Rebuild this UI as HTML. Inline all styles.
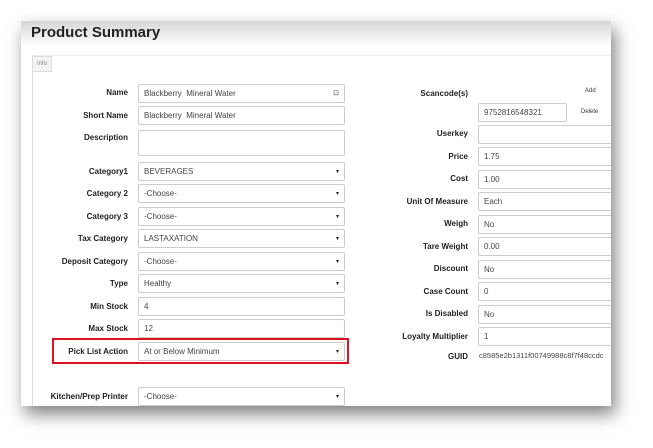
<!DOCTYPE html>
<html><head><style>
body{margin:0;width:653px;height:448px;background:#fff;position:relative;overflow:hidden;font-family:"Liberation Sans",Arial,sans-serif}
.panel{position:absolute;left:21px;top:21px;width:590px;height:385px;background:#fff;box-shadow:4px 8px 16px rgba(0,0,0,.5);overflow:hidden}
.hdr{position:absolute;left:0;top:0;width:590px;height:26px;background:linear-gradient(#d6d6d6,#f4f4f4 70%,#fff)}
.t{position:absolute;left:10px;top:3px;font-size:15px;font-weight:bold;color:#222}
.ln{position:absolute;left:11px;top:34px;width:579px;border-top:1px solid #eee}
.vl{position:absolute;left:11px;top:34px;height:360px;border-left:1px solid #ddd}
.tab{position:absolute;left:11px;top:35px;width:18px;height:14px;background:#f2f2f2;border:1px solid #ddd;font-size:6px;color:#888;line-height:14px;text-align:center}
.l{position:absolute;font-size:8px;font-weight:bold;color:#222;text-align:right;width:120px}
.i{position:absolute;border:1px solid #ccc;border-radius:2px;font-size:8px;color:#444;line-height:18px;padding-left:5px;box-sizing:border-box;height:19px;background:#fff}
.s::after{content:"▾";position:absolute;right:5px;top:0;font-size:6px;color:#222}
.red{position:absolute;left:31px;top:317px;width:297px;height:26px;border:2px solid #e01020;box-sizing:border-box}
.sm{position:absolute;font-size:6px;color:#333}
</style></head><body>
<div class="panel">
<div class="hdr"></div><div class="t">Product Summary</div>
<div class="ln"></div><div class="vl"></div><div class="tab">Info</div>

<div class="l" style="left:-13px;top:67px">Name</div><div class="i" style="left:117px;top:63px;width:207px">Blackberry&nbsp; Mineral Water<span style="position:absolute;right:5px;font-size:7px">⊡</span></div>
<div class="l" style="left:-13px;top:90px">Short Name</div><div class="i" style="left:117px;top:85px;width:207px">Blackberry&nbsp; Mineral Water</div>
<div class="l" style="left:-13px;top:112px">Description</div><div class="i" style="left:117px;top:109px;width:207px;height:26px"></div>
<div class="l" style="left:-13px;top:146px">Category1</div><div class="i s" style="left:117px;top:141px;width:207px">BEVERAGES</div>
<div class="l" style="left:-13px;top:168px">Category 2</div><div class="i s" style="left:117px;top:163px;width:207px">-Choose-</div>
<div class="l" style="left:-13px;top:191px">Category 3</div><div class="i s" style="left:117px;top:186px;width:207px">-Choose-</div>
<div class="l" style="left:-13px;top:213px">Tax Category</div><div class="i s" style="left:117px;top:208px;width:207px">LASTAXATION</div>
<div class="l" style="left:-13px;top:236px">Deposit Category</div><div class="i s" style="left:117px;top:231px;width:207px">-Choose-</div>
<div class="l" style="left:-13px;top:258px">Type</div><div class="i s" style="left:117px;top:253px;width:207px">Healthy</div>
<div class="l" style="left:-13px;top:281px">Min Stock</div><div class="i" style="left:117px;top:276px;width:207px">4</div>
<div class="l" style="left:-13px;top:303px">Max Stock</div><div class="i" style="left:117px;top:298px;width:207px">12</div>
<div class="red"></div>
<div class="l" style="left:-13px;top:326px">Pick List Action</div><div class="i s" style="left:117px;top:321px;width:207px">At or Below Minimum</div>
<div class="l" style="left:-13px;top:371px">Kitchen/Prep Printer</div><div class="i s" style="left:117px;top:366px;width:207px">-Choose-</div>

<div class="l" style="left:327px;top:68px">Scancode(s)</div><div class="sm" style="left:564px;top:67px">Add</div>
<div class="i" style="left:457px;top:82px;width:89px">9752816548321</div><div class="sm" style="left:560px;top:88px">Delete</div>
<div class="l" style="left:327px;top:108px">Userkey</div><div class="i" style="left:457px;top:104px;width:140px"></div>
<div class="l" style="left:327px;top:131px">Price</div><div class="i" style="left:457px;top:126px;width:140px">1.75</div>
<div class="l" style="left:327px;top:153px">Cost</div><div class="i" style="left:457px;top:149px;width:140px">1.00</div>
<div class="l" style="left:327px;top:176px">Unit Of Measure</div><div class="i" style="left:457px;top:171px;width:140px">Each</div>
<div class="l" style="left:327px;top:198px">Weigh</div><div class="i" style="left:457px;top:194px;width:140px">No</div>
<div class="l" style="left:327px;top:221px">Tare Weight</div><div class="i" style="left:457px;top:216px;width:140px">0.00</div>
<div class="l" style="left:327px;top:243px">Discount</div><div class="i" style="left:457px;top:239px;width:140px">No</div>
<div class="l" style="left:327px;top:266px">Case Count</div><div class="i" style="left:457px;top:261px;width:140px">0</div>
<div class="l" style="left:327px;top:288px">Is Disabled</div><div class="i" style="left:457px;top:284px;width:140px">No</div>
<div class="l" style="left:327px;top:311px">Loyalty Multiplier</div><div class="i" style="left:457px;top:306px;width:140px">1</div>
<div class="l" style="left:327px;top:331px">GUID</div><div style="position:absolute;left:458px;top:330px;font-size:7.5px;color:#444;white-space:nowrap">c8585e2b1311f00749988c8f7f48ccdc</div>
</div>
</body></html>
